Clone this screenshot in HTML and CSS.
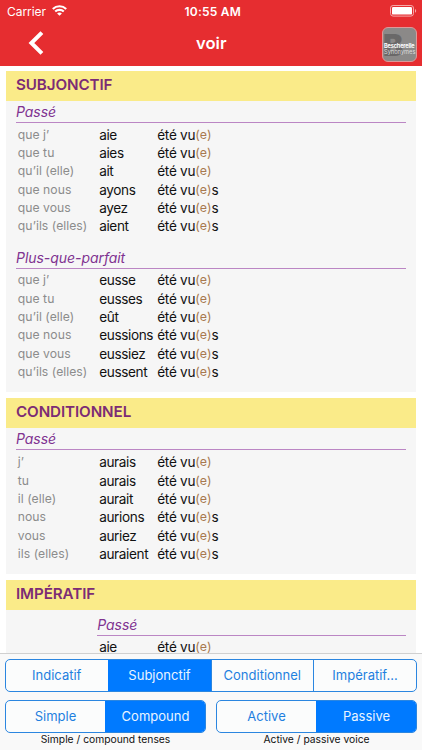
FILE: index.html
```
<!DOCTYPE html>
<html lang="fr">
<head>
<meta charset="utf-8">
<title>voir</title>
<link rel="stylesheet" href="styles.css">
</head>
<body>
<div class="app">
<header class="header">
  <div class="status">
    <div class="carrier"><span>Carrier</span>
      <svg class="wifi" width="15" height="11" viewBox="0 0 15 11" fill="none" stroke="#fff" stroke-width="2.1"><path d="M.8 4C4.6.3 10.4.3 14.2 4M3.2 6.6c2.4-2.3 6.2-2.3 8.6 0"/><path d="M7.5 10.7 5.1 8.4c1.3-1.2 3.5-1.2 4.8 0z" fill="#fff" stroke="none"/></svg>
    </div>
    <time class="clock">10:55 AM</time>
    <svg class="battery" width="27" height="12" viewBox="0 0 27 12"><rect x=".5" y=".5" width="23" height="10.6" rx="2.6" fill="none" stroke="#f6a9aa"/><rect x="2" y="2" width="20" height="7.6" rx="1.2" fill="#fff"/><path d="M25 4v3.8c1.6-.6 1.6-3.2 0-3.8z" fill="#f6a9aa"/></svg>
  </div>
  <nav class="nav">
    <svg class="back" width="16" height="24" viewBox="0 0 16 24" fill="none" stroke="#fff" stroke-width="4"><path d="M13.9 1.6 3.4 12l10.5 10.4"/></svg>
    <h1 class="title">voir</h1>
    <div class="badge"><span class="badge-b">B</span><span class="badge-name">Bescherelle</span><span class="badge-sub">Synonymes</span></div>
  </nav>
</header>
<main class="content">
  <section class="mood">
    <h2>SUBJONCTIF</h2>
    <h3>Passé</h3>
    <div class="rows">
      <div class="row"><i>que j’</i><b>aie</b><span>été vu<em>(e)</em></span></div>
      <div class="row"><i>que tu</i><b>aies</b><span>été vu<em>(e)</em></span></div>
      <div class="row"><i>qu’il (elle)</i><b>ait</b><span>été vu<em>(e)</em></span></div>
      <div class="row"><i>que nous</i><b>ayons</b><span>été vu<em>(e)</em>s</span></div>
      <div class="row"><i>que vous</i><b>ayez</b><span>été vu<em>(e)</em>s</span></div>
      <div class="row"><i>qu’ils (elles)</i><b>aient</b><span>été vu<em>(e)</em>s</span></div>
    </div>
    <h3>Plus-que-parfait</h3>
    <div class="rows">
      <div class="row"><i>que j’</i><b>eusse</b><span>été vu<em>(e)</em></span></div>
      <div class="row"><i>que tu</i><b>eusses</b><span>été vu<em>(e)</em></span></div>
      <div class="row"><i>qu’il (elle)</i><b>eût</b><span>été vu<em>(e)</em></span></div>
      <div class="row"><i>que nous</i><b>eussions</b><span>été vu<em>(e)</em>s</span></div>
      <div class="row"><i>que vous</i><b>eussiez</b><span>été vu<em>(e)</em>s</span></div>
      <div class="row"><i>qu’ils (elles)</i><b>eussent</b><span>été vu<em>(e)</em>s</span></div>
    </div>
  </section>
  <section class="mood">
    <h2>CONDITIONNEL</h2>
    <h3>Passé</h3>
    <div class="rows">
      <div class="row"><i>j’</i><b>aurais</b><span>été vu<em>(e)</em></span></div>
      <div class="row"><i>tu</i><b>aurais</b><span>été vu<em>(e)</em></span></div>
      <div class="row"><i>il (elle)</i><b>aurait</b><span>été vu<em>(e)</em></span></div>
      <div class="row"><i>nous</i><b>aurions</b><span>été vu<em>(e)</em>s</span></div>
      <div class="row"><i>vous</i><b>auriez</b><span>été vu<em>(e)</em>s</span></div>
      <div class="row"><i>ils (elles)</i><b>auraient</b><span>été vu<em>(e)</em>s</span></div>
    </div>
  </section>
  <section class="mood imperative">
    <h2>IMPÉRATIF</h2>
    <h3>Passé</h3>
    <div class="rows">
      <div class="row"><i></i><b>aie</b><span>été vu<em>(e)</em></span></div>
    </div>
  </section>
</main>
<footer class="toolbar">
  <div class="segments moods">
    <div class="segment">Indicatif</div><div class="segment on">Subjonctif</div><div class="segment">Conditionnel</div><div class="segment">Impératif...</div>
  </div>
  <div class="options">
    <div class="option"><div class="segments"><div class="segment">Simple</div><div class="segment on">Compound</div></div><p>Simple / compound tenses</p></div>
    <div class="option"><div class="segments"><div class="segment">Active</div><div class="segment on">Passive</div></div><p>Active / passive voice</p></div>
  </div>
</footer>
</div>
</body>
</html>
```
FILE: styles.css
```
* { box-sizing: border-box; margin: 0; padding: 0; }
body { font-family: Inter, "Liberation Sans", sans-serif; background: #fff; color: #111; }
.app { width: 422px; height: 750px; display: flex; flex-direction: column; overflow: hidden; }
.header { height: 65.5px; flex: none; background: #e62d30; color: #fff; }
.status { height: 22px; display: grid; grid-template-columns: 1fr auto 1fr; align-items: center; padding: 0 5px 0 7px; }
.carrier { display: flex; align-items: center; gap: 6px; font-size: 12px; }
.carrier span { letter-spacing: -.05px; }
.wifi { margin-top: -1px; }
.clock { font-size: 12px; font-weight: 600; letter-spacing: .2px; padding-left: 1.5px; }
.battery { justify-self: end; }
.nav { height: 43px; display: grid; grid-template-columns: 168px 1fr 35px; align-items: center; padding: 0 5px 0 28px; }
.back { margin-top: -1px; }
.title { font-size: 16.6px; font-weight: 600; line-height: 20px; margin-top: -2px; }
.badge { position: relative; width: 35px; height: 35px; margin-top: 2px; border: 1px solid #d99; border-radius: 6px; background: #8b8988; overflow: hidden; display: flex; flex-direction: column; padding: 15px 0 0 1px; line-height: 6px; }
.badge-b { position: absolute; left: 0; top: 5px; font-size: 30px; line-height: 24px; font-weight: 900; color: #6a6868; }
.badge-name { position: relative; font-size: 5.6px; font-weight: 700; letter-spacing: -.15px; }
.badge-sub { position: relative; font-size: 5.7px; color: #ddd; }
.content { flex: 1; min-height: 0; overflow: hidden; padding: 5px 6px 0 5.5px; }
.mood { background: #f6f6f6; padding-bottom: 11px; margin-bottom: 5.6px; }
h2 { height: 30.4px; background: #faeb89; color: #7c2c75; font-size: 15.2px; letter-spacing: -.1px; font-weight: 600; line-height: 28.4px; padding-left: 10.5px; }
h3 { height: 22px; margin: 0 10px 0 10.5px; border-bottom: 1px solid #bb86c4; color: #803391; font-size: 14px; letter-spacing: -.05px; font-style: italic; font-weight: 400; line-height: 22px; }
.rows { padding-top: 2.8px; }
.rows + h3 { margin-top: 10.8px; }
.row { display: grid; grid-template-columns: 81.4px 58px 1fr; height: 18.35px; line-height: 18.35px; padding-left: 12.3px; font-size: 13.6px; letter-spacing: -.38px; white-space: nowrap; }
.row span { letter-spacing: -.27px; }
.row i { font-style: normal; font-size: 12.2px; letter-spacing: .03px; line-height: 17.6px; color: #8c8c8c; }
.row b { font-weight: 400; }
.row em { font-style: normal; font-size: 12.4px; letter-spacing: .1px; line-height: 1; vertical-align: .7px; color: #a8794f; }
.imperative h3 { margin-left: 91.7px; height: 26.2px; line-height: 29.5px; }
.imperative .rows { padding-top: 2px; }
.toolbar { height: 97px; flex: none; background: #f9f9f9; border-top: 1px solid #d0d0d0; padding: 5px 5px 0; }
.segments { display: grid; grid-template-columns: 99px 1fr; height: 33px; border: 1px solid #2b86e0; border-radius: 5px; overflow: hidden; background: #fbfcfc; }
.moods { grid-template-columns: 101.5px 103px 102.5px 1fr; margin-bottom: 8px; }
.segment { text-align: center; font-size: 13px; line-height: 31px; color: #1f80df; border-left: 1px solid #2b86e0; }
.segment:first-child { border-left: 0; }
.segment.on { background: #007aff; color: #e9f4ff; border-color: #007aff; }
.options { display: grid; grid-template-columns: 1fr 1fr; gap: 10px; }
.option p { text-align: center; font-size: 10.3px; line-height: 12px; }
```
